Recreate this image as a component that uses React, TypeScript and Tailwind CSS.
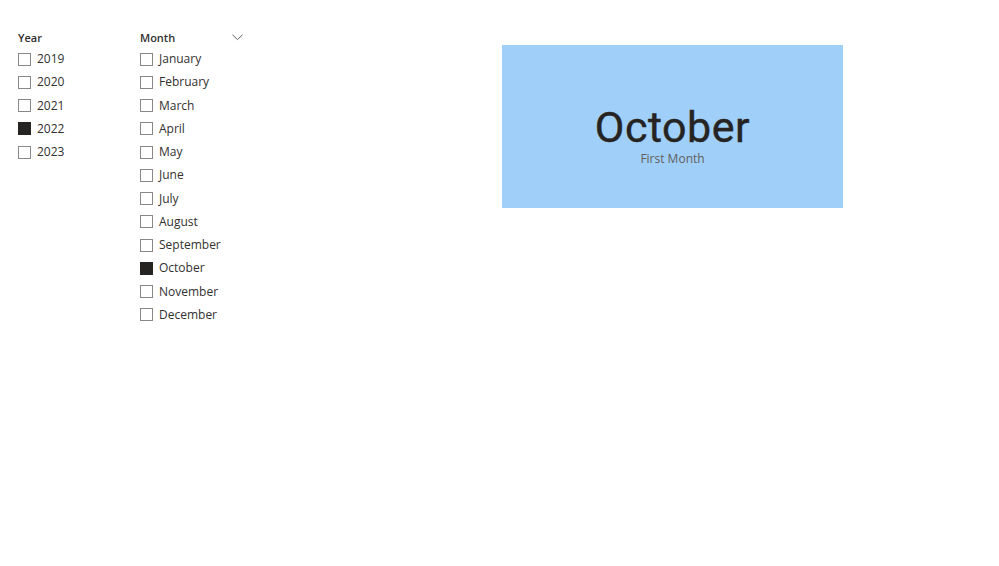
import React from "react";

const years = ["2019", "2020", "2021", "2022", "2023"];
const months = [
  "January",
  "February",
  "March",
  "April",
  "May",
  "June",
  "July",
  "August",
  "September",
  "October",
  "November",
  "December",
];

function Row({ label, checked }: { label: string; checked?: boolean }) {
  return (
    <div className="flex h-[23.25px] items-center gap-[6px]">
      <div
        className={
          checked
            ? "h-[13px] w-[13px] shrink-0 border border-[#252423] bg-[#252423]"
            : "h-[13px] w-[13px] shrink-0 border border-[#8a8886] bg-white"
        }
      />
      <span className="text-[12px] leading-none text-[#323130]">{label}</span>
    </div>
  );
}

export default function App() {
  return (
    <div
      className="relative h-[566px] w-[999px] overflow-hidden bg-white"
      style={{ fontFamily: '"Open Sans", "Noto Sans", sans-serif' }}
    >
      <div className="flex pt-[30px]">
        <div className="ml-[18px] w-[122px]">
          <div className="h-[15px] text-[11px] font-semibold leading-[15px] text-[#323130]">Year</div>
          <div className="pt-[2.5px]">
            {years.map((y) => (
              <Row key={y} label={y} checked={y === "2022"} />
            ))}
          </div>
        </div>
        <div className="w-[104px]">
          <div className="flex h-[15px] items-center justify-between">
            <span className="text-[11px] font-semibold leading-[15px] text-[#323130]">Month</span>
            <svg width="11" height="7" viewBox="0 0 11 7" className="mr-[1px] mt-[-1px]">
              <path d="M0.5 0.8 L5.5 5.6 L10.5 0.8" fill="none" stroke="#605e5c" strokeWidth="1" />
            </svg>
          </div>
          <div className="pt-[2.5px]">
            {months.map((m) => (
              <Row key={m} label={m} checked={m === "October"} />
            ))}
          </div>
        </div>
        <div className="ml-[258px] mt-[15px] flex h-[163px] w-[341px] flex-col items-center bg-[#a0d0fa]">
          <div
            className="mt-[57px] text-[43px] font-normal leading-[50px] tracking-[0.5px] text-[#252423]"
            style={{ fontFamily: 'Roboto, sans-serif', WebkitTextStroke: '0.4px #252423' }}
          >
            October
          </div>
          <div className="mt-[1px] text-[12px] leading-[12px] text-[#605e5c]">First Month</div>
        </div>
      </div>
    </div>
  );
}
